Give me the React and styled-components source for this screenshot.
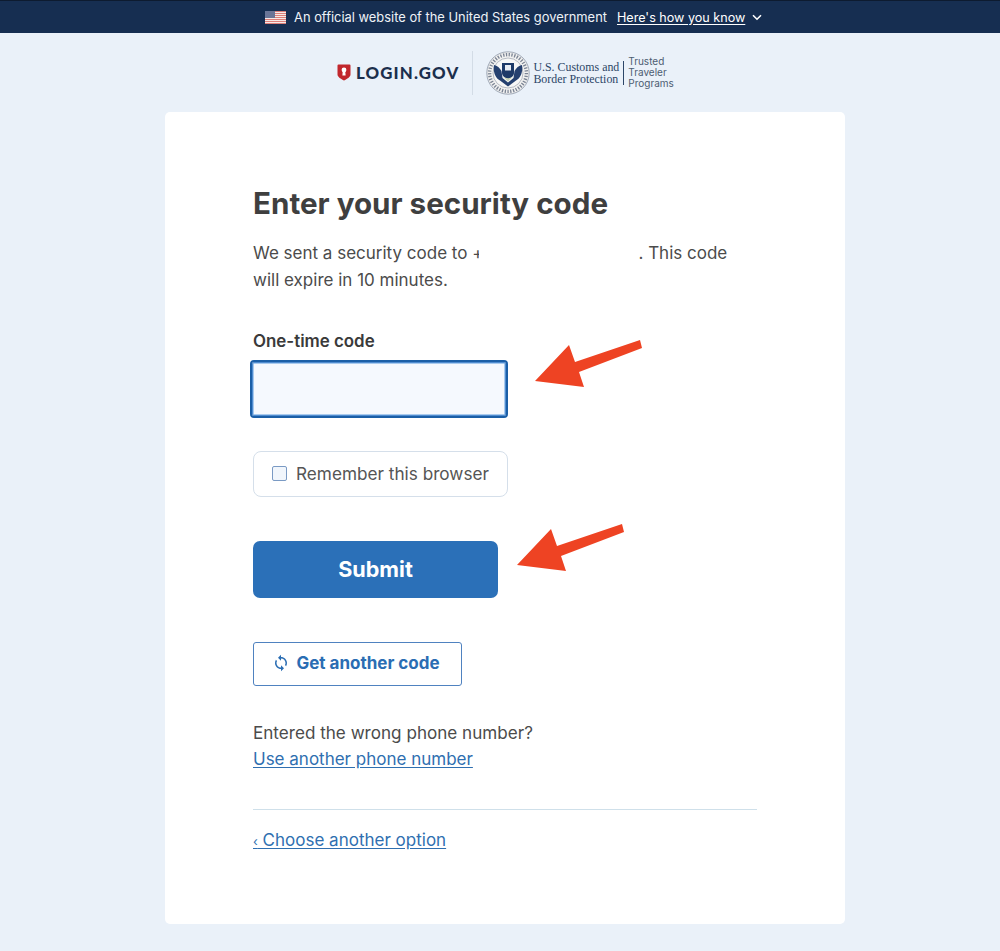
import React from 'react'
import styled, { createGlobalStyle } from 'styled-components'

const GlobalStyle = createGlobalStyle`
  html, body { margin: 0; padding: 0; }
  body {
    background-color: #eaf1f9;
    font-family: "Inter", "Liberation Sans", sans-serif;
    color: #454545;
  }
`

const Page = styled.div`
  width: 1000px;
  height: 951px;
  overflow: hidden;
`

const Banner = styled.div`
  height: 32px;
  background-color: #162e51;
  border-top: 1px solid #0d1b30;
  display: flex;
  align-items: center;
  justify-content: flex-start;
  padding-left: 265px;
  color: #eef2f7;
  font-size: 12.9px;
  span { margin-left: 8px; }
  a {
    margin-left: 10px;
    color: #fff;
    font-size: 12.6px;
    text-decoration: underline;
    text-underline-offset: 2px;
  }
  svg.chev { margin-left: 7px; }
`

const Header = styled.header`
  height: 79px;
  display: flex;
  align-items: center;
  padding-left: 337px;
`

const LoginLogo = styled.div`
  display: flex;
  align-items: center;
  gap: 5px;
  padding-right: 13px;
  height: 44px;
  border-right: 1px solid #d3dce6;
  font-family: "Lato", sans-serif;
  font-weight: 900;
  font-size: 16.8px;
  letter-spacing: 1.15px;
  color: #1b2f4d;
`

const Agency = styled.div`
  display: flex;
  align-items: center;
  margin-left: 13px;
`

const AgencyName = styled.div`
  margin-left: 3px;
  padding-right: 4px;
  border-right: 1px solid #2c4668;
  font-family: "Liberation Serif", serif;
  font-size: 11.9px;
  line-height: 12px;
  color: #2c4668;
  white-space: nowrap;
`

const Programs = styled.div`
  padding-left: 4px;
  font-size: 10px;
  line-height: 11px;
  color: #4d5d72;
`

const Card = styled.main`
  position: relative;
  width: 680px;
  height: 812px;
  margin-left: 165px;
  box-sizing: border-box;
  padding: 72px 88px 0;
  background-color: #fff;
  border-radius: 5px;
  display: flex;
  flex-direction: column;
  align-items: flex-start;
`

const Title = styled.h1`
  margin: 0;
  font-size: 29.6px;
  line-height: 38px;
  font-weight: 700;
  color: #3f3f3f;
`

const Intro = styled.p`
  margin: 18px 0 0;
  width: 490px;
  font-size: 17px;
  line-height: 26.5px;
  color: #4b4b4b;
`

const Redacted = styled.span`
  position: relative;
  padding-right: 155px;
  &::after {
    content: "";
    position: absolute;
    left: 7px;
    right: 0;
    top: 0;
    bottom: 0;
    background-color: #fff;
  }
`

const Label = styled.label`
  margin-top: 36px;
  font-size: 16.9px;
  line-height: 24px;
  font-weight: 600;
  color: #3a3a3a;
`

const CodeInput = styled.input`
  display: block;
  margin-top: 10px;
  width: 252px;
  height: 52px;
  box-sizing: border-box;
  border: 1px solid #a9cbee;
  border-radius: 1px;
  background-color: #f5f9fe;
  box-shadow: 0 0 0 1px #4f8cd0;
  outline: 2px solid #1b5fa7;
  outline-offset: 1px;
`

const RememberBox = styled.label`
  margin-top: 36px;
  width: 255px;
  height: 46px;
  box-sizing: border-box;
  border: 1px solid #d5dfea;
  border-radius: 8px;
  display: flex;
  align-items: center;
  padding: 0 0 2px 18px;
  font-size: 17.2px;
  color: #555;
`

const Check = styled.span`
  width: 15px;
  height: 15px;
  box-sizing: border-box;
  border: 1.5px solid #7a9ac4;
  border-radius: 2px;
  background-color: #f1f6fc;
  margin-right: 9px;
`

const SubmitButton = styled.button`
  margin-top: 44px;
  width: 245px;
  height: 57px;
  padding: 0 0 2px;
  border: none;
  border-radius: 7px;
  background-color: #2b70b8;
  color: #fff;
  font-family: inherit;
  font-size: 21.6px;
  font-weight: 700;
`

const OutlineButton = styled.button`
  margin-top: 44px;
  width: 209px;
  height: 44px;
  padding: 0 3px 2px 0;
  border: 1px solid #4f82c0;
  border-radius: 3px;
  background-color: #fff;
  color: #2a6db3;
  font-family: inherit;
  font-size: 17px;
  font-weight: 700;
  display: flex;
  align-items: center;
  justify-content: center;
  gap: 6px;
`

const Question = styled.p`
  margin: 34px 0 0;
  font-size: 17.1px;
  line-height: 26px;
  color: #4b4b4b;
`

const TextLink = styled.a`
  color: #2f6fb0;
  font-size: 17px;
  line-height: 26.5px;
  text-decoration: underline;
  text-underline-offset: 2px;
`

const BackMark = styled.span`
  font-size: 12.5px;
`

const Divider = styled.hr`
  margin: 36px 0 0;
  width: 504px;
  border: none;
  border-top: 1px solid #cfe0ea;
`

const BackRow = styled.div`
  margin-top: 17px;
`

const Arrow = styled.svg`
  position: absolute;
  left: ${(p) => p.$left}px;
  top: ${(p) => p.$top}px;
`

const Flag = () => (
  <svg width="21" height="13" viewBox="0 0 21 13">
    <rect width="21" height="13" fill="#f6e9e6" />
    {[0, 2, 4, 6, 8, 10, 12].map((y) => (
      <rect key={y} y={y} width="21" height="1" fill="#dc7f7a" />
    ))}
    <rect width="10" height="7" fill="#6a7597" />
  </svg>
)

const Chevron = () => (
  <svg className="chev" width="10" height="7" viewBox="0 0 10 7" fill="none">
    <path d="M1 1.2 5 5.2 9 1.2" stroke="#fff" strokeWidth="1.6" />
  </svg>
)

const Shield = () => (
  <svg width="14" height="17" viewBox="0 0 14 17">
    <path d="M1.500 .5h11a1 1 0 0 1 1 1v9c0 2.500-3.500 4.500-6.500 6-3-1.500-6.500-3.500-6.500-6v-9a1 1 0 0 1 1-1z" fill="#c1272d" />
    <circle cx="7" cy="6" r="2.400" fill="#fff" />
    <path d="M5.800 6.500h2.400l.4 5h-3.200z" fill="#fff" />
  </svg>
)

const Seal = () => (
  <svg width="44" height="44" viewBox="0 0 44 44">
    <circle cx="22" cy="22" r="21.200" fill="#f1f1f0" stroke="#8c96a6" strokeWidth="0.8" />
    <circle cx="22" cy="22" r="18.400" fill="none" stroke="#7b8494" strokeWidth="3.400" strokeDasharray="1.300 1.500" />
    <circle cx="22" cy="22" r="15" fill="#f7f7f6" stroke="#8b94a3" strokeWidth="0.6" />
    <path d="M8 14c3 .6 6 3 7.500 6l1 7 5.500 4.500 5.500-4.500 1-7c1.500-3 4.500-5.400 7.500-6 1 6.500-1 13-6 15.500l-8 6-8-6c-5-2.500-7-9-6-15.500z" fill="#25406f" />
    <path d="M16 12h12v10c0 3-3 5-6 6-3-1-6-3-6-6z" fill="#1e3a68" />
    <rect x="19" y="14" width="6" height="5.500" fill="#e8ecf2" />
    <path d="M16.500 25c3 3 8 3 11 0l-5.500 5.500z" fill="#c7d2b5" />
  </svg>
)

const Sync = () => (
  <svg width="18" height="18" viewBox="0 0 24 24" fill="#2a6db3">
    <path d="M12 4V1L8 5l4 4V6c3.310 0 6 2.690 6 6 0 1.010-.25 1.970-.7 2.800l1.460 1.460C19.540 15.030 20 13.570 20 12c0-4.420-3.580-8-8-8zm0 14c-3.310 0-6-2.690-6-6 0-1.010.25-1.970.7-2.800L5.240 7.740C4.460 8.970 4 10.430 4 12c0 4.420 3.580 8 8 8v3l4-4-4-4v3z" />
  </svg>
)

const RedArrow = ({ left, top }) => (
  <Arrow $left={left} $top={top} width="108" height="48" viewBox="0 0 108 48">
    <polygon points="0,41 34,5 40,22 105,0 107,8 44,32 49,47" fill="#ee4323" />
  </Arrow>
)

const App = () => {
  return (
    <Page>
      <GlobalStyle />
      <Banner>
        <Flag />
        <span>An official website of the United States government</span>
        <a>Here's how you know</a>
        <Chevron />
      </Banner>
      <Header>
        <LoginLogo>
          <Shield />
          LOGIN.GOV
        </LoginLogo>
        <Agency>
          <Seal />
          <AgencyName>
            U.S. Customs and
            <br />
            Border Protection
          </AgencyName>
          <Programs>
            Trusted
            <br />
            Traveler
            <br />
            Programs
          </Programs>
        </Agency>
      </Header>
      <Card>
        <Title>Enter your security code</Title>
        <Intro>
          We sent a security code to <Redacted>+</Redacted>. This code will expire in 10 minutes.
        </Intro>
        <Label>One-time code</Label>
        <CodeInput type="text" aria-label="One-time code" />
        <RememberBox>
          <Check />
          Remember this browser
        </RememberBox>
        <SubmitButton>Submit</SubmitButton>
        <OutlineButton>
          <Sync />
          Get another code
        </OutlineButton>
        <Question>Entered the wrong phone number?</Question>
        <TextLink>Use another phone number</TextLink>
        <Divider />
        <BackRow>
          <TextLink><BackMark>‹</BackMark> Choose another option</TextLink>
        </BackRow>
        <RedArrow left={370} top={228} />
        <RedArrow left={352} top={412} />
      </Card>
    </Page>
  )
}

export default App
